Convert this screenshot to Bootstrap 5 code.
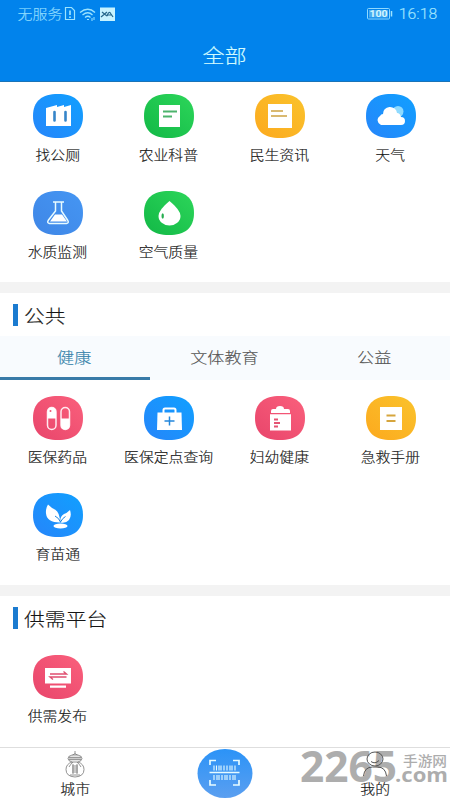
<!DOCTYPE html>
<html lang="zh-CN">
<head>
<meta charset="utf-8">
<meta name="viewport" content="width=device-width, initial-scale=1">
<title>全部</title>
<link href="https://cdn.jsdelivr.net/npm/bootstrap@5.3.0/dist/css/bootstrap.min.css" rel="stylesheet">
<style>
body{font-family:"Noto Sans CJK SC",sans-serif;color:#151515;height:800px;overflow:hidden;font-weight:300}
main{min-height:0;overflow:hidden}
.wide{display:inline-block;transform:scaleX(1.125);white-space:nowrap;-webkit-text-stroke:.15px currentColor}
.topbar{background:#0183ec;height:82px;border-bottom:1px solid #1a74b8;color:#d2fbff}
.status{height:28px;padding:0 15px 0 20px;font-size:13.3px;color:#8fdcff}
.status .time{font-family:Roboto,sans-serif;font-size:14px;font-weight:300;color:#a2e6ff}
.title{font-size:19.6px;height:54px;line-height:54px}
.services{padding:0 4px 0 2px}
.services>div{height:97px}
.services svg{display:block;width:50px;height:44px}
.services .wide{font-size:13.2px;line-height:20px;margin-top:7px}
.band{height:11px;background:#f3f3f3}
.heading{height:43px;padding-left:13px;font-size:18.5px}
.heading i{width:5px;height:22px;background:#1b7bd0}
.heading .wide{transform-origin:left;margin-left:6px;padding-top:1px}
.tabs{height:44px;background:#f8fbfe;font-size:15.2px}
.tabs>a{color:#555;text-decoration:none;border-bottom:3px solid transparent}
.tabs>a .wide{margin-right:1px}
.tabs>a.on{color:#3683aa;border-color:#397ba8}
.bottom{height:53px;border-top:1px solid #dedede;font-size:13.2px;line-height:17px}
.water{position:absolute;right:0;bottom:10px;width:152px;height:46px}
</style>
<script src="https://cdn.jsdelivr.net/npm/bootstrap@5.3.0/dist/js/bootstrap.bundle.min.js"></script>
</head>
<body class="bg-white d-flex flex-column position-relative">
<svg width="0" height="0" class="position-absolute">
<defs>
<linearGradient id="blue" x1="1" y1="0" x2="0" y2="1"><stop stop-color="#10a0ff"/><stop offset="1" stop-color="#2685fa"/></linearGradient>
<linearGradient id="steel" x1="1" y1="0" x2="0" y2="1"><stop stop-color="#4596f3"/><stop offset="1" stop-color="#3f86e6"/></linearGradient>
<linearGradient id="green" x1="1" y1="0" x2="0" y2="1"><stop stop-color="#2dd65a"/><stop offset="1" stop-color="#12b846"/></linearGradient>
<linearGradient id="gold" x1="1" y1="0" x2="0" y2="1"><stop stop-color="#fac32c"/><stop offset="1" stop-color="#fca91e"/></linearGradient>
<linearGradient id="rose" x1="1" y1="0" x2="0" y2="1"><stop stop-color="#fa607c"/><stop offset="1" stop-color="#e8456b"/></linearGradient>
<linearGradient id="scan" x1="0" y1="0" x2="0" y2="1"><stop stop-color="#2b93f7"/><stop offset="1" stop-color="#5b9ff0"/></linearGradient>
<path id="tile" d="M25 0C41 0 50 7 50 22S41 44 25 44 0 37 0 22 9 0 25 0Z"/>
</defs>
</svg>
<header class="topbar flex-shrink-0">
<div class="status d-flex align-items-center">
<span class="wide">无服务</span>
<svg class="ms-1" width="54" height="16" viewBox="0 0 54 16" fill="none" stroke="#9ce3ff"><path d="M1.500 1.500h6l3 3v9h-9z" stroke-width="1.2"/><path d="M6 4.500v4.500M6 10.500v1.500" stroke-width="1.700"/><path d="M16 6.500q8-6.500 15 0M18.500 9q5.500-4.500 10 0M21 11.500q3-2.500 5.500 0" stroke-width="1.300"/><path d="M23 13.500h2M28 12v3M30 11v3"/><path d="M36 1.500H51v13.500H36z" fill="#c6f3ff" stroke="none"/><path d="M38 6l5 4m0-4-6 5M43 10q2-6 4-2l2 3M44 9h4" stroke="#26688c" stroke-width="1.200"/></svg>
<svg class="ms-auto me-2" width="26" height="12" viewBox="0 0 26 12"><rect x=".5" y=".5" width="22" height="10.500" rx="1" fill="none" stroke="#8fd9ff"/><rect x="2" y="2" width="19" height="7.500" fill="#4aabf0"/><path d="M24.500 3v5.500" stroke="#9ce3ff" stroke-width="1.500"/><text x="11.500" y="9.300" text-anchor="middle" textLength="18" lengthAdjust="spacingAndGlyphs" font-family="Roboto,sans-serif" font-size="9.500" font-weight="700" fill="#d3f6ff">100</text></svg>
<span class="wide time">16:18</span>
</div>
<div class="title text-center"><span class="wide">全部</span></div>
</header>

<main class="flex-grow-1">
<section class="services row g-0" style="padding-top:12px">
<div class="col-3 d-flex flex-column align-items-center"><svg viewBox="0 0 50 44"><use href="#tile" fill="url(#blue)"/><path d="M13 14l11-3v2l7-2v2l7-2v21H13z" fill="#fff"/><path d="M21.500 18v8.500M32.500 18v8.500" stroke="#3685c9" stroke-width="2.600" stroke-linecap="round"/></svg><span class="wide">找公厕</span></div>
<div class="col-3 d-flex flex-column align-items-center"><svg viewBox="0 0 50 44"><use href="#tile" fill="url(#green)"/><path d="M15 11h21v22H15z" fill="#fff"/><path d="M19 17.500h14M19 22.500h9" stroke="#4cb46c" stroke-width="2"/></svg><span class="wide">农业科普</span></div>
<div class="col-3 d-flex flex-column align-items-center"><svg viewBox="0 0 50 44"><use href="#tile" fill="url(#gold)"/><path d="M13 10h24v24H13z" fill="#fff"/><path d="M16 17h12M16 22h16" stroke="#cda243" stroke-width="1.700"/></svg><span class="wide">民生资讯</span></div>
<div class="col-3 d-flex flex-column align-items-center"><svg viewBox="0 0 50 44"><use href="#tile" fill="url(#blue)"/><circle cx="32" cy="17.500" r="5.500" fill="#8edaff"/><path d="M15 31a5 5 0 0 1-1-9q1-2 3-2a7 6.500 0 0 1 14-1q3 0 4 4a4 4 0 0 1 0 8z" fill="#fff"/></svg><span class="wide">天气</span></div>
<div class="col-3 d-flex flex-column align-items-center"><svg viewBox="0 0 50 44"><use href="#tile" fill="url(#steel)"/><path d="M20 11h11M22.500 11v9l-7 9q-2 3 1 3.500h17q3-.5 1-3.500l-6-9v-9" fill="none" stroke="#e8fbff" stroke-width="1.500"/><path d="M22 23.500h7l5 7H17z" fill="#fff"/></svg><span class="wide">水质监测</span></div>
<div class="col-3 d-flex flex-column align-items-center"><svg viewBox="0 0 50 44"><use href="#tile" fill="url(#green)"/><path d="M25.500 10q11 9 11 15a11 9.500 0 0 1-22 0q0-6 11-15z" fill="#fff"/><ellipse cx="18.700" cy="25" rx="1.200" ry="2.700" fill="#26ae50"/></svg><span class="wide">空气质量</span></div>
</section>
<div class="band" style="margin-top:-6px"></div>
<h2 class="heading d-flex align-items-center m-0 fw-light"><i></i><span class="wide">公共</span></h2>
<nav class="tabs d-flex text-center">
<a href="#" class="on col-4 d-flex align-items-center justify-content-center"><span class="wide">健康</span></a>
<a href="#" class="col-4 d-flex align-items-center justify-content-center"><span class="wide">文体教育</span></a>
<a href="#" class="col-4 d-flex align-items-center justify-content-center"><span class="wide">公益</span></a>
</nav>
<section class="services row g-0" style="padding-top:16px">
<div class="col-3 d-flex flex-column align-items-center"><svg viewBox="0 0 50 44"><use href="#tile" fill="url(#rose)"/><g stroke="#ffe9ef" stroke-width="1.500" fill="none"><rect x="14.500" y="11.500" width="8.500" height="22" rx="4.250"/><rect x="28" y="11.500" width="8.500" height="22" rx="4.250"/></g><path d="M14.500 22.500V16q0-4.500 4.250-4.500T23 16v6.500zM28 22.500h8.500V29q0 4.500-4.250 4.500T28 29z" fill="#fff"/><circle cx="17.500" cy="15" r="1" fill="#ef5674"/></svg><span class="wide">医保药品</span></div>
<div class="col-3 d-flex flex-column align-items-center"><svg viewBox="0 0 50 44"><use href="#tile" fill="url(#blue)"/><path d="M19.500 17v-3q0-1.500 1.500-1.500h9q1.500 0 1.500 1.500v3" fill="none" stroke="#fff" stroke-width="2"/><path d="M13.500 16.500h24l.5 17.500H13z" fill="#fff"/><path d="M25.500 20.500v9M20.500 25h10" stroke="#2387dc" stroke-width="1.500"/></svg><span class="wide">医保定点查询</span></div>
<div class="col-3 d-flex flex-column align-items-center"><svg viewBox="0 0 50 44"><use href="#tile" fill="url(#rose)"/><path d="M16 17v-2q0-2 2-2h3q0-3 4-3t4 3h4q2 0 2 2v2zM15 18.300h21V34.500H15z" fill="#fff"/><path d="M19 23.500h4M19 27h6M19 30.500h4" stroke="#e45473" stroke-width="1.800"/></svg><span class="wide">妇幼健康</span></div>
<div class="col-3 d-flex flex-column align-items-center"><svg viewBox="0 0 50 44"><use href="#tile" fill="url(#gold)"/><path d="M14 11h22v23H14z" fill="#fff"/><path d="M20.500 19.500h9M20.500 25h9" stroke="#d6a53d" stroke-width="2"/></svg><span class="wide">急救手册</span></div>
<div class="col-3 d-flex flex-column align-items-center"><svg viewBox="0 0 50 44"><use href="#tile" fill="url(#blue)"/><path d="M27 29.500q-13 0-14-9-.5-5 2-9 4 4 7 5 5 3 5 13zM27.500 29.500q-1-6 3.500-8.500 3-1 6-4 2 6-1 10-3 3.500-8.500 2.500z" fill="#fff"/><path d="M22 23q4 2 5.500 6 2-4 5-5.500" fill="none" stroke="#2187dd" stroke-width="1"/><ellipse cx="27.500" cy="33" rx="7" ry="2.500" fill="#fff"/></svg><span class="wide">育苗通</span></div>
</section>
<div class="band" style="margin-top:-5px"></div>
<h2 class="heading d-flex align-items-center m-0 fw-light"><i></i><span class="wide">供需平台</span></h2>
<section class="services row g-0" style="padding-top:16px">
<div class="col-3 d-flex flex-column align-items-center"><svg viewBox="0 0 50 44"><use href="#tile" fill="url(#rose)"/><path d="M12 13h26v15.500H12zM17 30.500h16v2.300H17z" fill="#fff"/><path d="M17 19h16.500l-3-2.500M33.500 22H17l3 2.500" fill="none" stroke="#df4f70" stroke-width="1.400"/></svg><span class="wide">供需发布</span></div>
</section>
</main>

<footer class="bottom flex-shrink-0 d-flex text-center">
<div class="col-4 d-flex flex-column align-items-center"><svg width="22" height="28" viewBox="0 0 22 28" class="flex-shrink-0" style="margin:3px 0 1px" fill="none" stroke="#777" stroke-width=".8"><path d="M11 0v3M8.500 4q2.500-2.500 5 0M8 4Q4 5 4 7.500T8 11h6q4-1 4-3.500T14 4zM8 11q-6 2-6 7.500 0 7 9 7.500 9-.5 9-7.500 0-5.500-6-7.500M9 13v10M13 13v10M9 11q-3 3-4 5M13 11q3 3 4 5M8 15h6M8 17h6M8 19h6M8 21h6M6 24h10"/><path d="M4 6.500h14M5 8.500h12" stroke="#999" stroke-width="1.500"/></svg><span class="wide">城市</span></div>
<div class="col-4 d-flex justify-content-center"><svg width="56" height="50" viewBox="0 0 56 50"><ellipse cx="28" cy="25.500" rx="27.500" ry="24.500" fill="url(#scan)"/><g stroke="#e6fbff" fill="none"><path d="M13 17v-4.500h6M36 12.500h6v4.500M13 32v5h6M36 37h6v-5" stroke-width="1.700"/><path d="M12.500 24.500h30" stroke-width="1.500"/><path d="M17 17.500v5M19.500 17.500v5M22 17.500v5M24 17.500v5M27 17.500v5M30 17.500v5M33 17.500v5M35 17.500v5M38 17.500v5M17 27v5M20 27v5M22 27v5M25 27v5M28 27v5M30 27v5M33 27v5M36 27v5M38 27v5" stroke-width="1.100"/></g></svg></div>
<div class="col-4 d-flex flex-column align-items-center" style="padding-top:32px"><span class="wide">我的</span></div>
</footer>
<svg class="water" viewBox="298 744 152 46">
<g fill="#adadad"><text x="300" y="782" font-family="Open Sans,sans-serif" font-weight="700" font-size="43" textLength="97" lengthAdjust="spacingAndGlyphs">2265</text><text x="403" y="765.500" font-family="Noto Sans CJK SC,sans-serif" font-weight="500" font-size="14" textLength="44" lengthAdjust="spacingAndGlyphs">手游网</text><text x="395" y="782" font-family="Open Sans,sans-serif" font-weight="700" font-size="20" textLength="53" lengthAdjust="spacingAndGlyphs">.com</text></g>
<g fill="none" stroke="#555"><ellipse cx="375" cy="759" rx="8" ry="7"/><path d="M371 761.500q4 3 8-1M363.500 776q1-9 9-9h5q8 0 9 9"/></g>
</svg>
</body>
</html>
